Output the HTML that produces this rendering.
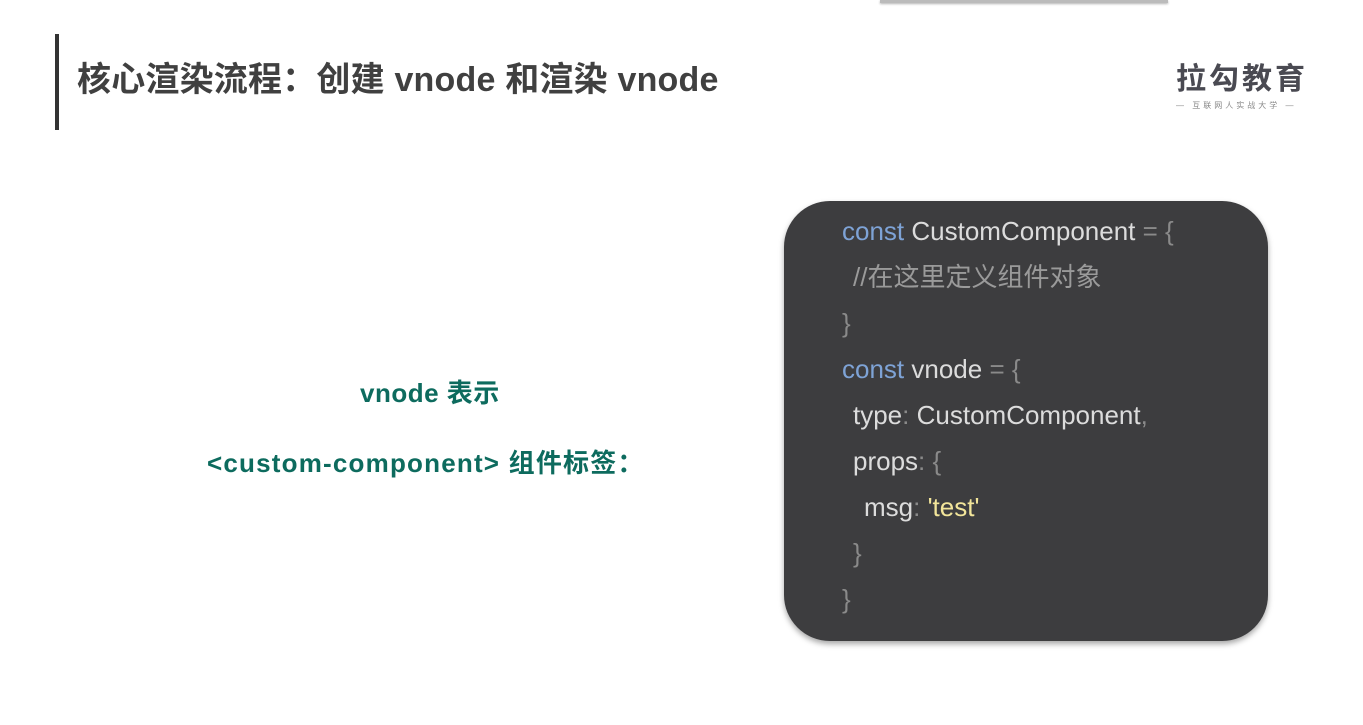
<!DOCTYPE html>
<html><head><meta charset="utf-8"><style>
body{margin:0;width:1363px;height:725px;background:#fff;position:relative;overflow:hidden;font-family:"Liberation Sans","Noto Sans CJK SC",sans-serif}
.topbar{position:absolute;left:880px;top:0;width:288px;height:3px;background:#bbb;box-shadow:0 1px 2px rgba(0,0,0,.3)}
.vbar{position:absolute;left:55px;top:34px;width:4px;height:96px;background:#333}
.title{position:absolute;left:77px;top:58px;font-size:34px;font-weight:bold;color:#404040;line-height:44px;white-space:nowrap;letter-spacing:0.2px}
.logo{position:absolute;left:1176px;top:60px;font-size:30px;font-weight:bold;color:#4a4a52;letter-spacing:3px;line-height:40px}
.logo2{position:absolute;left:1176px;top:100px;font-size:8px;color:#888;letter-spacing:3px;white-space:nowrap}
.g{position:absolute;color:#0d6b5e;font-weight:bold;font-size:26px;white-space:nowrap}
.box{position:absolute;left:784px;top:201px;width:484px;height:440px;background:#3d3d3f;border-radius:46px;box-shadow:0 3px 6px rgba(0,0,0,.35)}
.code{position:absolute;left:842px;top:208px;font-size:26px;line-height:46px;color:#dcdcdc;white-space:pre}
.k{color:#7ea3d6}.p{color:#8a8a8a}.s{color:#f2e59a}.c{color:#9a9a9a}
.i1{padding-left:11px}.i2{padding-left:22px}
</style></head><body>
<div class="topbar"></div>
<div class="vbar"></div>
<div class="title">核心渲染流程：创建 vnode 和渲染 vnode</div>
<div class="logo">拉勾教育</div>
<div class="logo2">— 互联网人实战大学 —</div>
<div class="g" style="left:360px;top:373px;letter-spacing:0.5px">vnode 表示</div>
<div class="g" style="left:207px;top:443px;letter-spacing:1.2px">&lt;custom-component&gt; 组件标签：</div>
<div class="box"></div>
<div class="code"><span class="k">const</span> CustomComponent <span class="p">= {</span>
<span class="i1 c">//在这里定义组件对象</span>
<span class="p">}</span>
<span class="k">const</span> vnode <span class="p">= {</span>
<span class="i1">type<span class="p">:</span> CustomComponent<span class="p">,</span></span>
<span class="i1">props<span class="p">: {</span></span>
<span class="i2">msg<span class="p">:</span> <span class="s">'test'</span></span>
<span class="i1 p">}</span>
<span class="p">}</span></div>
</body></html>
